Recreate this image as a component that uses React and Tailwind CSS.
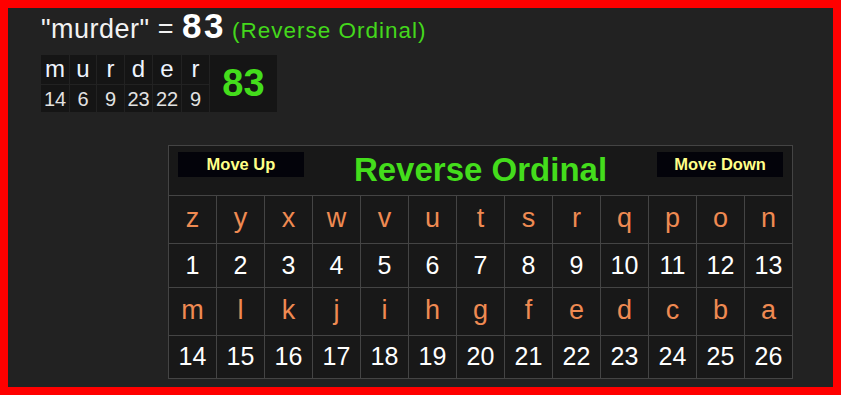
import React from 'react';

const word = [
  ['m', 14, 'w-[29px]'],
  ['u', 6, 'w-[27px]'],
  ['r', 9, 'w-[28px]'],
  ['d', 23, 'w-[28px]'],
  ['e', 22, 'w-[29px]'],
  ['r', 9, 'w-[28px]'],
];

const alphabet = 'zyxwvutsrqponmlkjihgfedcba'.split('');

const LetterRows = ({ letters, start, last }) => (
  <>
    {letters.map((l) => (
      <div key={'l' + l} className="bg-[#181818] h-[47px] flex items-center justify-center text-[27px] pb-[2px] text-[#ef8a52]">
        {l}
      </div>
    ))}
    {letters.map((l, i) => (
      <div
        key={'n' + l}
        className={`bg-[#181818] ${last ? 'h-[42px]' : 'h-[43px]'} flex items-center justify-center text-[25px] text-white`}
      >
        {start + i}
      </div>
    ))}
  </>
);

const App = () => {
  return (
    <div
      className="w-[841px] h-[395px] border-8 border-[#ff0000] bg-[#222222] overflow-hidden"
      style={{ fontFamily: '"Liberation Sans", Arial, sans-serif' }}
    >
      {/* title line */}
      <div className="pl-[33px] h-[47px] flex items-baseline text-[#f2f2f2] leading-none">
        <span className="text-[27px] tracking-[0.5px]">"murder" =&nbsp;</span>
        <span className="text-[35px] font-bold text-white tracking-[2.5px]">83</span>
        <span className="text-[22.5px] text-[#44d81c] ml-[6px] tracking-[1px]">(Reverse Ordinal)</span>
      </div>

      {/* word breakdown */}
      <div className="ml-[33px] flex w-fit bg-[#151515]">
        <div className="flex">
          {word.map(([ch, n, w], i) => (
            <div key={i} className={`flex flex-col border-r border-[#222] ${w}`}>
              <div className="h-[30px] flex items-center justify-center text-[24px] pb-[2px] text-[#eef4ff] border-b border-[#222]">
                {ch}
              </div>
              <div className="h-[27px] flex items-center justify-center text-[20px] text-[#e2e2e2]">
                {n}
              </div>
            </div>
          ))}
        </div>
        <div className="w-[67px] flex items-center justify-center text-[38px] font-bold text-[#44dd1c]">
          83
        </div>
      </div>

      {/* cipher table */}
      <div className="ml-[160px] mt-[33px] w-[625px] border border-[#444] bg-[#444]">
        <div className="h-[50px] bg-[#181818] flex items-start justify-between px-[9px] border-b border-[#444]">
          <div className="mt-[6px] w-[126px] h-[25px] bg-[#03030a] flex items-center justify-center text-[16.5px] font-bold text-[#ffff88]">
            Move Up
          </div>
          <div className="mt-[7px] text-[33px] leading-none font-bold text-[#44dd1c]">Reverse Ordinal</div>
          <div className="mt-[6px] w-[126px] h-[25px] bg-[#03030a] flex items-center justify-center text-[16.5px] font-bold text-[#ffff88]">
            Move Down
          </div>
        </div>
        <div className="grid grid-cols-13 gap-px">
          <LetterRows letters={alphabet.slice(0, 13)} start={1} />
          <LetterRows letters={alphabet.slice(13)} start={14} last />
        </div>
      </div>
    </div>
  );
};

export default App;
